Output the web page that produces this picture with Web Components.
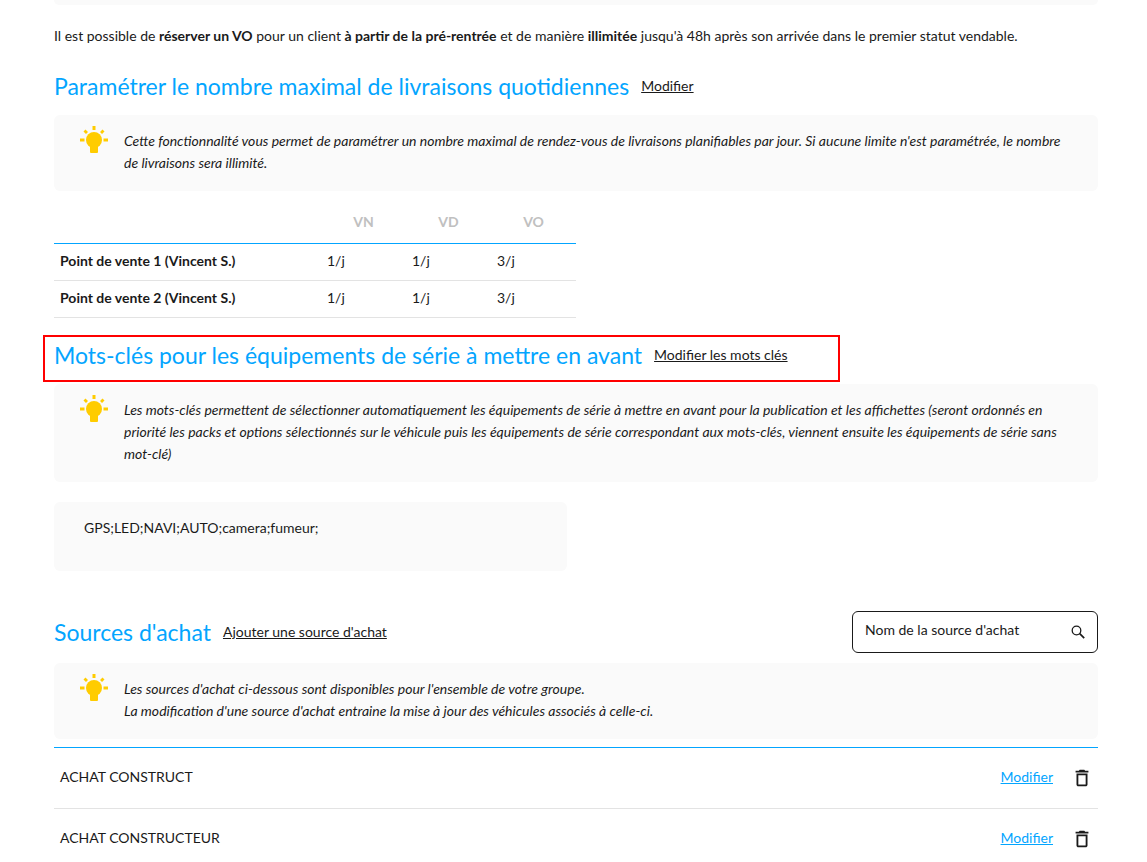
<!DOCTYPE html>
<html lang="fr">
<head>
<meta charset="utf-8">
<title>Paramètres</title>
<style>
  html { background: #fff; }
  body {
    margin: 0;
    font: 14px/22px Lato, "Liberation Sans", sans-serif;
    color: #1a1a1a;
    --blue: #03a5ff;
    --panel: #fafafa;
    --line: #e3e3e3;
  }
</style>
</head>
<body>
<settings-page></settings-page>

<script>
const define = (name, html, setup) => {
  const template = document.createElement('template');
  template.innerHTML = html;
  customElements.define(name, class extends HTMLElement {
    constructor() {
      super();
      this.attachShadow({ mode: 'open' }).append(template.content.cloneNode(true));
    }
    connectedCallback() {
      if (setup && !this.ready) { this.ready = true; setup(this, this.shadowRoot); }
    }
  });
};

define('section-head', `
  <style>
    :host { display: flex; align-items: center; justify-content: space-between; min-height: 42px; }
    .title { display: flex; align-items: center; gap: 12px; }
    h2 { margin: 0; font-size: 23px; line-height: 30px; font-weight: 400; color: var(--blue); }
    a { color: inherit; text-decoration: underline; }
  </style>
  <div class="title"><h2><slot></slot></h2><a href="#"></a></div>
  <slot name="tool"></slot>`,
  (host, root) => { root.querySelector('a').textContent = host.getAttribute('action'); });

define('tip-box', `
  <style>
    :host { display: flex; gap: 14px; padding: 15px 30px 17px 24px; border-radius: 6px; background: var(--panel); font-style: italic; }
    svg { flex: none; width: 32px; height: 32px; margin-top: -7px; }
  </style>
  <svg viewBox="0 0 32 32" fill="#fc0" aria-hidden="true">
    <circle cx="16" cy="17" r="8"/>
    <path d="M12 22h8v7q0 1-1 1h-6q-1 0-1-1z"/>
    <path d="M14.5 3h3v4h-3zM2 15.500h4.500v3H2zM25.500 15.500H30v3h-4.500zM5.500 8.500l2-2 2.500 2.500-2 2zM26.500 8.500l-2-2L22 9l2 2z"/>
  </svg>
  <div><slot></slot></div>`);

define('delivery-table', `
  <style>
    :host { display: block; }
    table { width: 50%; border-collapse: separate; border-spacing: 0; table-layout: fixed; }
    th, td { padding: 6px 6px 8px; text-align: left; border-bottom: 1px solid var(--line); }
    col.quota { width: 85px; }
    thead th, thead td { padding: 10px 6px; font-weight: 700; text-align: center; color: #c0c0c0; border-color: var(--blue); }
  </style>
  <table>
    <colgroup><col><col class="quota"><col class="quota"><col class="quota"></colgroup>
    <thead><tr><td></td><th scope="col">VN</th><th scope="col">VD</th><th scope="col">VO</th></tr></thead>
    <tbody>
      <tr><th scope="row">Point de vente 1 (Vincent S.)</th><td>1/j</td><td>1/j</td><td>3/j</td></tr>
      <tr><th scope="row">Point de vente 2 (Vincent S.)</th><td>1/j</td><td>1/j</td><td>3/j</td></tr>
    </tbody>
  </table>`);

define('search-field', `
  <style>
    :host { display: flex; align-items: center; box-sizing: border-box; width: 246px; height: 42px; padding: 0 12px; border: 1px solid #1a1a1a; border-radius: 6px; background: #fff; }
    input { flex: 1; min-width: 0; padding: 0; border: 0; outline: 0; background: none; font: inherit; height: 22px; margin-bottom: 4px; }
    input, input::placeholder { color: #1a1a1a; opacity: 1; }
    svg { flex: none; width: 14px; height: 14px; }
  </style>
  <input type="text" aria-label="Nom de la source d'achat" placeholder="Nom de la source d'achat">
  <svg viewBox="0 0 14 14" fill="none" stroke="#1a1a1a" aria-hidden="true"><circle cx="5.500" cy="5.500" r="4.300" stroke-width="1.300"/><path d="M8.700 8.700l4.500 4.500" stroke-width="1.700"/></svg>`);

define('source-table', `
  <style>
    :host { display: block; }
    table { width: 100%; border-collapse: separate; border-spacing: 0; border-top: 1px solid var(--blue); }
    td { height: 58px; padding: 0 5px 2px 6px; border-bottom: 1px solid var(--line); }
    .actions { display: flex; align-items: center; justify-content: flex-end; gap: 18px; }
    a { color: var(--blue); text-decoration: underline; }
    button { display: flex; padding: 0; border: 0; background: none; color: #1a1a1a; margin-top: 2px; }
    svg { width: 22px; height: 22px; }
  </style>
  <table><tbody></tbody></table>`,
  (host, root) => {
    root.querySelector('tbody').innerHTML = host.getAttribute('sources').split(';').map(name => `
      <tr><td>${name}</td><td><div class="actions"><a href="#">Modifier</a>
        <button type="button" aria-label="Supprimer ${name}"><svg viewBox="0 0 24 24" fill="currentColor" aria-hidden="true"><path d="M16 9v10H8V9h8m-1.500-6h-5l-1 1H5v2h14V4h-3.500l-1-1zM18 7H6v12c0 1.100.9 2 2 2h8c1.100 0 2-.9 2-2V7z"/></svg></button>
      </div></td></tr>`).join('');
  });

define('settings-page', `
  <style>
    :host { display: flow-root; padding: 0 49px 0 54px; }
    .previous { height: 5px; border-radius: 0 0 6px 6px; background: var(--panel); }
    p { margin: 20px 0 18px; }
    tip-box { margin-top: 8px; }
    delivery-table { margin: 10px 0 16px; }
    .marked { position: relative; }
    .marked::after { content: ""; position: absolute; top: 1px; left: -11px; width: 797px; height: 47px; box-sizing: border-box; border: 2px solid #f00; pointer-events: none; }
    .keywords { box-sizing: border-box; width: calc(50% - 9px); min-height: 69px; margin: 20px 0 40px; padding: 15px 30px; border-radius: 6px; background: var(--panel); }
    .sources { margin-top: 10px; }
    source-table { margin-top: 8px; }
  </style>
  <div class="previous"></div>
  <p>Il est possible de <b>réserver un VO</b> pour un client <b>à partir de la pré-rentrée</b> et de manière <b>illimitée</b> jusqu'à 48h après son arrivée dans le premier statut vendable.</p>
  <section-head action="Modifier">Paramétrer le nombre maximal de livraisons quotidiennes</section-head>
  <tip-box>Cette fonctionnalité vous permet de paramétrer un nombre maximal de rendez-vous de livraisons planifiables par jour. Si aucune limite n'est paramétrée, le nombre de livraisons sera illimité.</tip-box>
  <delivery-table></delivery-table>
  <div class="marked"><section-head action="Modifier les mots clés">Mots-clés pour les équipements de série à mettre en avant</section-head></div>
  <tip-box>Les mots-clés permettent de sélectionner automatiquement les équipements de série à mettre en avant pour la publication et les affichettes (seront ordonnés en priorité les packs et options sélectionnés sur le véhicule puis les équipements de série correspondant aux mots-clés, viennent ensuite les équipements de série sans mot-clé)</tip-box>
  <div class="keywords">GPS;LED;NAVI;AUTO;camera;fumeur;</div>
  <section-head action="Ajouter une source d'achat">Sources d'achat<search-field slot="tool"></search-field></section-head>
  <tip-box class="sources">Les sources d'achat ci-dessous sont disponibles pour l'ensemble de votre groupe.<br>La modification d'une source d'achat entraine la mise à jour des véhicules associés à celle-ci.</tip-box>
  <source-table sources="ACHAT CONSTRUCT;ACHAT CONSTRUCTEUR"></source-table>`);
</script>
</body>
</html>
